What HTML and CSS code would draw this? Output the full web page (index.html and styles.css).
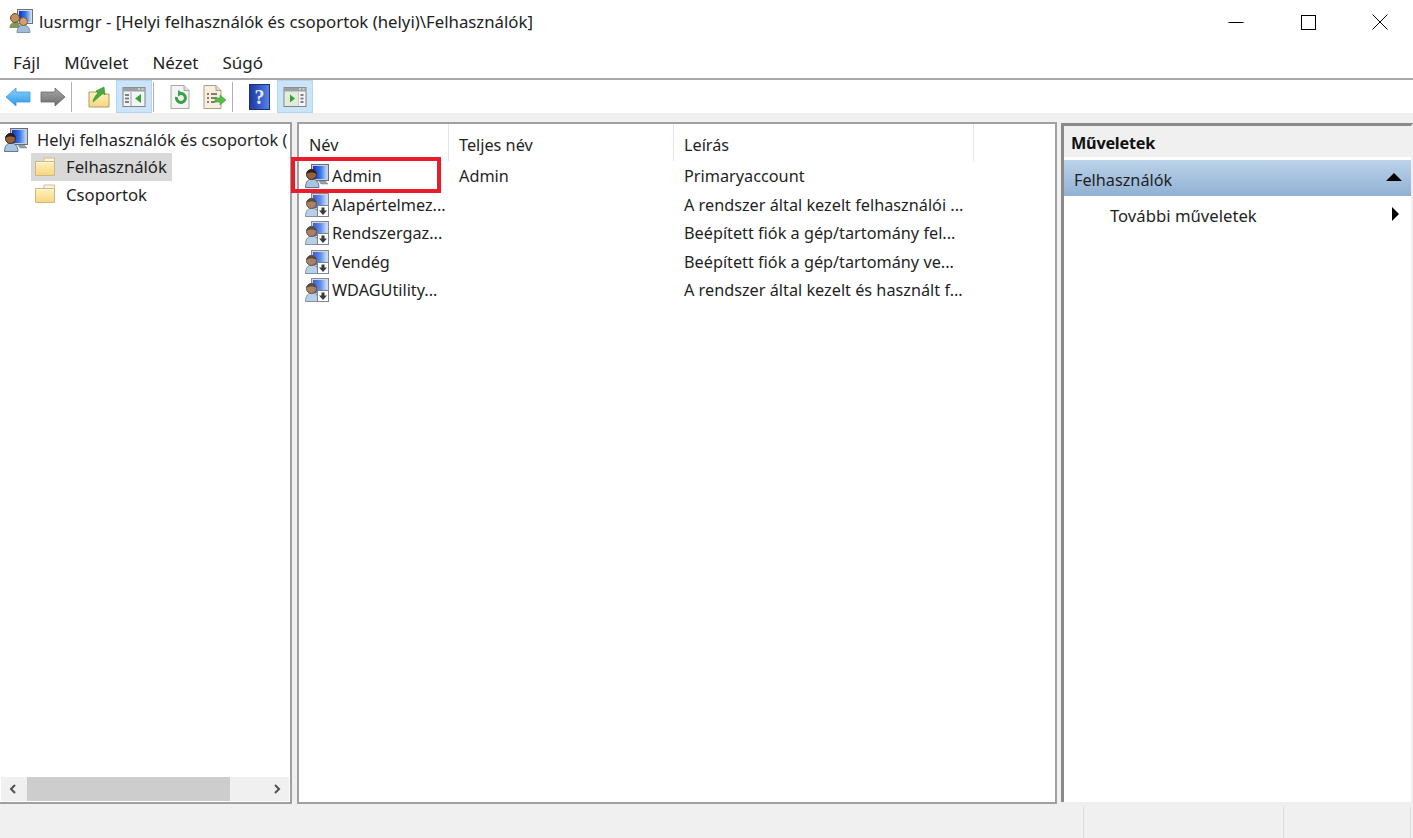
FILE: index.html
```html
<!DOCTYPE html>
<html lang="hu">
<head>
<meta charset="utf-8">
<title>lusrmgr</title>
<link rel="stylesheet" href="styles.css">
</head>
<body>
<svg class="defs" width="0" height="0" aria-hidden="true">
  <defs>
    <linearGradient id="gFolder" x1="0" y1="0" x2="0" y2="1"><stop offset="0" stop-color="#fff2bc"/><stop offset="1" stop-color="#f6d680"/></linearGradient>
    <linearGradient id="gBlue" x1="0" y1="0" x2="0" y2="1"><stop offset="0" stop-color="#8ed4fa"/><stop offset="1" stop-color="#2a98e4"/></linearGradient>
    <linearGradient id="gGrey" x1="0" y1="0" x2="0" y2="1"><stop offset="0" stop-color="#a8a8a8"/><stop offset="1" stop-color="#6e6e6e"/></linearGradient>
    <linearGradient id="gScreen" x1="0" y1="0" x2="1" y2="0"><stop offset="0" stop-color="#1030c8"/><stop offset=".55" stop-color="#3a78e8"/><stop offset="1" stop-color="#c0d8f4"/></linearGradient>
    <linearGradient id="gHelp" x1="0" y1="0" x2="1" y2="0"><stop offset="0" stop-color="#1c3a98"/><stop offset=".6" stop-color="#3a62d0"/><stop offset="1" stop-color="#5a86e0"/></linearGradient>
    <symbol id="folder" viewBox="0 0 22 20">
      <path d="M10 1h10.500v4H10Z" fill="#fdf6d8" stroke="#cdbd90"/>
      <path d="M1.500 4.500h18l1 .5V18.500H1.500Z" fill="url(#gFolder)" stroke="#cdb884"/>
      <path d="M2.500 5.500h17" stroke="#fffbe4"/>
    </symbol>
    <symbol id="user" viewBox="0 0 24 24">
      <rect x="6.500" y=".5" width="17" height="16" fill="#c8ced6" stroke="#666e78"/>
      <rect x="8" y="2" width="14" height="13" fill="url(#gScreen)"/>
      <path d="M14 17h6l3 3h-7Z" fill="#98a2ae" stroke="#6c7480" stroke-width=".5"/>
      <path d="M.5 23.500c0-6 3-8.500 6.500-8.500s7 2.500 7 8.500Z" fill="#a8c4e0" stroke="#3f5e80" stroke-width=".8"/>
      <circle cx="6.500" cy="10.500" r="5" fill="#96623a" stroke="#3c2a1c"/>
      <path d="M1.500 10c0-6 10-6.500 10 0-2.500-2-7.500-2-10 0Z" fill="#2c2018"/>
    </symbol>
    <symbol id="down" viewBox="0 0 12 12">
      <rect x=".5" y=".5" width="11" height="11" fill="#fff" stroke="#7a8490"/>
      <path d="M4.500 2.500h3v3H10L6 10 2 5.500h2.500Z" fill="#3a3a3a"/>
    </symbol>
    <symbol id="pane" viewBox="0 0 24 22">
      <rect x="1" y="1.500" width="22" height="19" fill="#f4f6f6" stroke="#7c8286"/>
      <rect x="1" y="1.500" width="22" height="4" fill="#9aa0a4"/>
      <path d="M16 3h2M19.500 3h2" stroke="#fff"/>
    </symbol>
  </defs>
</svg>

<div class="window">
  <header class="titlebar">
    <svg class="app-icon" viewBox="0 0 24 24" width="24" height="24">
      <rect x="8.500" y=".5" width="15" height="14" fill="#d8dde4" stroke="#6c7480"/>
      <rect x="10" y="2" width="12" height="11" fill="url(#gScreen)"/>
      <path d="M.5 19c0-4 3-6 5.500-6s5.500 2 5.500 6Z" fill="#7f9a58"/>
      <circle cx="6" cy="9" r="4.500" fill="#c09060" stroke="#6a4a2c"/>
      <path d="M8 23.500c0-5 3-7.500 6.500-7.500s6.500 2.500 6.500 7.500Z" fill="#a0bcd8" stroke="#5a7a9a" stroke-width=".7"/>
      <circle cx="14.500" cy="12.500" r="4" fill="#d8a070" stroke="#7a5a3c"/>
    </svg>
    <span class="title-text">lusrmgr - [Helyi felhasználók és csoportok (helyi)\Felhasználók]</span>
    <div class="caption-buttons">
      <svg class="cap" viewBox="0 0 16 16" width="16" height="16"><path d="M0.500 8.500h15" stroke="#000" fill="none"/></svg>
      <svg class="cap" viewBox="0 0 16 16" width="16" height="16"><rect x="1.500" y="1.500" width="14" height="14" stroke="#000" fill="none"/></svg>
      <svg class="cap" viewBox="0 0 16 16" width="16" height="16"><path d="M.5 .5l15 15M15.500 .5l-15 15" stroke="#000" fill="none"/></svg>
    </div>
  </header>

  <nav class="menubar">
    <span class="menu-item">Fájl</span>
    <span class="menu-item">Művelet</span>
    <span class="menu-item">Nézet</span>
    <span class="menu-item">Súgó</span>
  </nav>

  <div class="toolbar">
    <span class="tool"><svg viewBox="0 0 26 22" width="26" height="22"><path d="M1 11 11 2v4h14v10H11v4Z" fill="url(#gBlue)" stroke="#3a9ae0" stroke-width=".8"/></svg></span>
    <span class="tool"><svg viewBox="0 0 26 22" width="26" height="22"><path d="M25 11 15 2v4H1v10h14v4Z" fill="url(#gGrey)" stroke="#666" stroke-width=".8"/></svg></span>
    <span class="tool-sep"></span>
    <span class="tool"><svg viewBox="0 0 24 24" width="24" height="24"><path d="M2 7h8l2 2h10v13H2Z" fill="url(#gFolder)" stroke="#b09a60"/><path d="M6 17c1-5 3-7 5-9L9 6l8-4 1 8-2-2c-2 2-5 5-10 9Z" fill="#4caa3c" stroke="#2f8a2c" stroke-width=".6"/></svg></span>
    <span class="tool tool-on"><svg viewBox="0 0 24 22" width="24" height="22"><use href="#pane"/><path d="M9 6v14" stroke="#9aa0a4"/><path d="M3 9h4M3 12.500h4M3 16h4" stroke="#7c8286" stroke-width="2"/><path d="M19 8v9l-6-4.500Z" fill="#3aa03a"/></svg></span>
    <span class="tool-sep"></span>
    <span class="tool tool-narrow"><svg viewBox="0 0 22 26" width="22" height="26"><path d="M2 1.500h13l5 5v18H2Z" fill="#f4f4f2" stroke="#a8a8a4"/><path d="M15 1.500v5h5" fill="#dcdcd8" stroke="#a8a8a4"/><path d="M7.500 13a4.500 4.500 0 1 0 3.500-3.500" fill="none" stroke="#3aa04a" stroke-width="3"/><path d="M9 6l5 3.500-5 3Z" fill="#3aa04a"/></svg></span>
    <span class="tool tool-narrow"><svg viewBox="0 0 26 26" width="26" height="26"><path d="M3 1.500h12l5 5v18H3Z" fill="#f8f0dc" stroke="#a8a090"/><path d="M15 1.500v5h5" fill="#e4dcc4" stroke="#a8a090"/><path d="M6 10h2M10 10h6M6 14h2M10 14h6M6 18h2M10 18h4" stroke="#5a5a50" stroke-width="1.300"/><path d="M14 14h5v-3l6 5-6 5v-3h-5Z" fill="#58bc48" stroke="#3f9a3a" stroke-width=".6"/></svg></span>
    <span class="tool-sep"></span>
    <span class="tool"><svg viewBox="0 0 21 26" width="21" height="26"><rect x=".5" y=".5" width="20" height="25" fill="url(#gHelp)" stroke="#1c2f78"/><text class="help-mark" x="10.500" y="20" text-anchor="middle">?</text></svg></span>
    <span class="tool tool-on"><svg viewBox="0 0 24 22" width="24" height="22"><use href="#pane"/><path d="M15 6v14" stroke="#9aa0a4"/><path d="M2 6h13v14H2Z" fill="#e2ecd8"/><path d="M7 8.500v8l5-4Z" fill="#3aa03a"/><path d="M17.500 9h3M17.500 12.500h3M17.500 16h3" stroke="#7c8286" stroke-width="2"/></svg></span>
  </div>

  <main class="workspace">
    <section class="tree-pane">
      <div class="tree-scroll">
        <div class="tree-root">
          <svg width="24" height="24"><use href="#user"/></svg>
          <span class="tree-label">Helyi felhasználók és csoportok (</span>
        </div>
        <div class="tree-item tree-selected">
          <svg class="folder" width="22" height="20"><use href="#folder"/></svg>
          <span>Felhasználók</span>
        </div>
        <div class="tree-item">
          <svg class="folder" width="22" height="20"><use href="#folder"/></svg>
          <span>Csoportok</span>
        </div>
      </div>
      <div class="hscroll">
        <svg class="chev" viewBox="0 0 10 10" width="10" height="10"><path d="M7 1 3 5l4 4" fill="none" stroke="#505050" stroke-width="2"/></svg>
        <div class="hscroll-track"><div class="hscroll-thumb"></div></div>
        <svg class="chev" viewBox="0 0 10 10" width="10" height="10"><path d="M3 1l4 4-4 4" fill="none" stroke="#505050" stroke-width="2"/></svg>
      </div>
    </section>

    <section class="list-pane">
      <div class="list-row list-head">
        <span class="col col-name">Név</span>
        <span class="col col-full">Teljes név</span>
        <span class="col col-desc">Leírás</span>
      </div>
      <div class="list-body">
        <div class="list-row">
          <span class="col col-name"><svg class="row-icon" width="24" height="24"><use href="#user"/></svg>Admin</span>
          <span class="col col-full">Admin</span>
          <span class="col col-desc">Primaryaccount</span>
        </div>
        <div class="list-row">
          <span class="col col-name"><span class="row-icon user-off"><svg class="user-dim" width="24" height="24"><use href="#user"/></svg><svg class="badge" width="12" height="12"><use href="#down"/></svg></span>Alapértelmez...</span>
          <span class="col col-full"></span>
          <span class="col col-desc">A rendszer által kezelt felhasználói ...</span>
        </div>
        <div class="list-row">
          <span class="col col-name"><span class="row-icon user-off"><svg class="user-dim" width="24" height="24"><use href="#user"/></svg><svg class="badge" width="12" height="12"><use href="#down"/></svg></span>Rendszergaz...</span>
          <span class="col col-full"></span>
          <span class="col col-desc">Beépített fiók a gép/tartomány fel...</span>
        </div>
        <div class="list-row">
          <span class="col col-name"><span class="row-icon user-off"><svg class="user-dim" width="24" height="24"><use href="#user"/></svg><svg class="badge" width="12" height="12"><use href="#down"/></svg></span>Vendég</span>
          <span class="col col-full"></span>
          <span class="col col-desc">Beépített fiók a gép/tartomány ve...</span>
        </div>
        <div class="list-row">
          <span class="col col-name"><span class="row-icon user-off"><svg class="user-dim" width="24" height="24"><use href="#user"/></svg><svg class="badge" width="12" height="12"><use href="#down"/></svg></span>WDAGUtility...</span>
          <span class="col col-full"></span>
          <span class="col col-desc">A rendszer által kezelt és használt f...</span>
        </div>
      </div>
    </section>

    <aside class="actions-pane">
      <div class="actions-title">Műveletek</div>
      <div class="actions-group"><span>Felhasználók</span><span class="tri-up"></span></div>
      <div class="actions-item"><span>További műveletek</span><span class="tri-right"></span></div>
    </aside>

    <div class="highlight"></div>
  </main>

  <footer class="statusbar">
    <span class="status-cell status-main"></span>
    <span class="status-cell status-mid"></span>
    <span class="status-cell status-end"></span>
  </footer>
</div>
</body>
</html>
```

FILE: styles.css
```css
* { box-sizing: border-box; }
html, body { margin: 0; padding: 0; }
body {
  width: 1413px;
  height: 838px;
  overflow: hidden;
  background: #fff;
  color: #1f1f1f;
  font-family: "Noto Sans", "Open Sans", "Liberation Sans", sans-serif;
  font-size: 16.25px;
}
.defs { position: absolute; }
svg { display: block; flex: none; }

.window { display: flex; flex-direction: column; height: 838px; }

.titlebar { height: 44px; display: flex; align-items: center; padding-left: 9px; background: #fff; }
.app-icon { margin-bottom: 2px; }
.title-text { margin-left: 6px; padding-bottom: 1px; font-size: 16.8px; color: #222; }
.caption-buttons { margin-left: auto; display: flex; gap: 56px; padding-right: 25px; }

.menubar { height: 34px; display: flex; align-items: center; padding: 2px 0 0 13px; gap: 24px; background: #fff; }
.menu-item { font-size: 17px; color: #222; }

.toolbar {
  height: 35px;
  display: flex;
  align-items: center;
  background: #fff;
  border-top: 2px solid #a8a8a8;
}
.tool { width: 35px; height: 33px; display: flex; align-items: center; justify-content: center; }
.tool-narrow { width: 34px; }
.tool-on { width: 36px; background: #cce4f7; border: 1px solid #b4d6f2; }
.tool-sep { width: 1px; height: 30px; background: #b0b0b0; margin: 0 9px 0 1px; }
.help-mark { font: bold 20px "Liberation Serif", serif; fill: #e8e8ff; }

.workspace {
  position: relative;
  flex: 1;
  display: flex;
  background: #f0f0f0;
  padding-top: 9px;
  min-height: 0;
}

.tree-pane {
  width: 292px;
  display: flex;
  flex-direction: column;
  background: #fff;
  border: 2px solid #a0a0a0;
  border-left: 0;
}
.tree-scroll { flex: 1; overflow: hidden; padding: 2px 0 0 4px; font-size: 16.4px; }
.tree-root { display: flex; align-items: center; height: 27px; white-space: nowrap; }
.tree-label { margin-left: 9px; }
.tree-item { display: flex; align-items: center; height: 27.5px; width: 141px; margin-left: 27px; padding-left: 3px; font-size: 16.7px; }
.tree-selected { background: #d9d9d9; }
.folder { margin-right: 10px; }

.hscroll { height: 24px; display: flex; align-items: center; background: #f0f0f0; margin: 0 1px 1px 1px; padding: 0 8px 0 7px; }
.hscroll-track { flex: 1; height: 100%; padding: 0 42px 0 9px; }
.hscroll-thumb { width: 203px; height: 100%; background: #cdcdcd; }

.list-pane {
  width: 760px;
  margin-left: 5px;
  background: #fff;
  border: 2px solid #a0a0a0;
}
.list-row { display: flex; height: 28.5px; align-items: center; }
.list-head { height: 37px; }
.list-head .col { padding-top: 4px; border-right: 1px solid #e6e6e6; }
.list-body { padding-top: 1px; }
.col { display: flex; align-items: center; white-space: nowrap; height: 100%; padding-left: 10px; }
.col-name { width: 150px; padding-left: 6px; }
.col-full { width: 225px; }
.col-desc { width: 300px; }
.list-head .col-name { padding-left: 10px; }
.row-icon { margin-right: 3px; }
.user-off { position: relative; display: block; width: 24px; height: 24px; flex: none; }
.user-dim { opacity: .8; }
.badge { position: absolute; right: 0; bottom: 0; }

.actions-pane {
  width: 352px;
  margin: 1px 0 2px 4px;
  background: #fff;
  border-left: 3px solid #8a8a8a;
  border-top: 3px solid #8a8a8a;
  border-right: 2px solid #f0f0f0;
}
.actions-title { height: 31px; padding: 2px 0 0 7px; display: flex; align-items: center; font-weight: 700; background: #f0f0f0; color: #111; letter-spacing: -.25px; }
.actions-group {
  margin-top: 3px;
  height: 36px;
  display: flex;
  align-items: center;
  justify-content: space-between;
  padding: 3px 9px 0 10px;
  background: linear-gradient(#bcd3ea, #90b1d3);
}
.actions-item { height: 39px; display: flex; align-items: center; justify-content: space-between; padding: 0 12px 0 46px; font-size: 16.7px; }
.tri-up { width: 0; height: 0; border-left: 8px solid transparent; border-right: 8px solid transparent; border-bottom: 8px solid #000; margin-top: -5px; }
.tri-right { width: 0; height: 0; border-top: 7px solid transparent; border-bottom: 7px solid transparent; border-left: 7px solid #000; margin-top: -4px; }

.highlight {
  position: absolute;
  left: 291px;
  top: 44px;
  width: 150px;
  height: 36px;
  border: 4px solid #e81c2c;
}

.statusbar { height: 34px; display: flex; background: #f0f0f0; padding-top: 3px; }
.status-cell { display: block; height: 100%; border-right: 1px solid #dcdcdc; }
.status-main { width: 1084px; }
.status-mid { width: 200px; }
.status-end { width: 127px; }
```
